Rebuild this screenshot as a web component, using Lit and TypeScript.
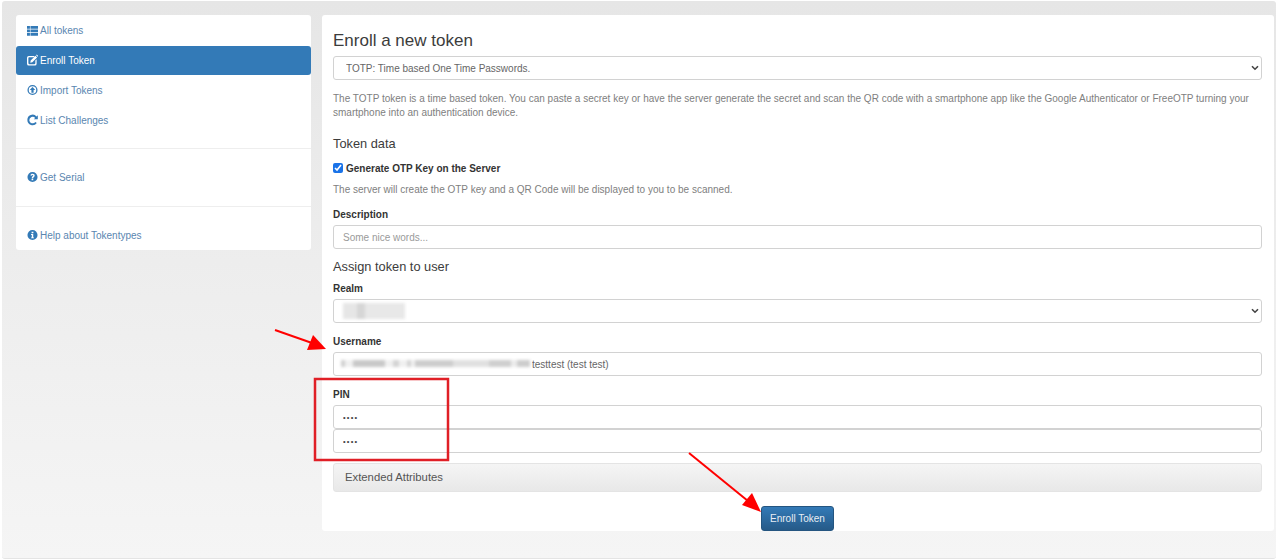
import { LitElement, html, css, svg, unsafeCSS } from "lit";
import { customElement } from "lit/decorators.js";

const icons: Record<string, unknown> = {
  list: svg`<path d="M0 .5h3.2v3H0zM3.8 .5H12v3H3.8zM0 4.4h3.2v3H0zM3.8 4.4H12v3H3.8zM0 8.3h3.2v3H0zM3.8 8.3H12v3H3.8z"/>`,
  edit: svg`<path fill-rule="evenodd" d="M2 1.5h6.5L7.2 2.9H2.4a.9.9 0 0 0-.9.9v5.8c0 .5.4.9.9.9h5.8c.5 0 .9-.4.9-.9V6.6l1.4-1.4V10a2 2 0 0 1-2 2H2a2 2 0 0 1-2-2V3.5a2 2 0 0 1 2-2z"/><path d="M4 6.6 9.2 1.4 11 3.2 5.8 8.4 3.6 8.9zM9.9.7l.7-.7 1.8 1.8-.7.7z"/>`,
  import: svg`<path fill-rule="evenodd" d="M6 .5a5.5 5.5 0 1 1 0 11 5.5 5.5 0 0 1 0-11zm0 1.4a4.1 4.1 0 1 0 0 8.2 4.1 4.1 0 0 0 0-8.2z"/><path d="M6 2.7 9 6H7.2v3H4.8V6H3z"/>`,
  refresh: svg`<path d="M10.4 2.1 11.8 .8v4.4H7.4l1.5-1.5A3.7 3.7 0 0 0 2.5 6.2a3.7 3.7 0 0 0 6.6 2l1.6 1.2A5.7 5.7 0 0 1 .4 6a5.7 5.7 0 0 1 10-3.9z"/>`,
  question: svg`<path fill-rule="evenodd" d="M6 .5a5.5 5.5 0 1 1 0 11 5.5 5.5 0 0 1 0-11zM5 8v1.6h1.8V8zM6.1 2.4c-1.3 0-2.2.6-2.5 1.8l1.4.4c.2-.6.5-.9 1-.9s.8.3.8.7c0 .4-.3.6-.7.9-.6.4-.9.9-.9 1.6v.4h1.6v-.3c0-.3.2-.5.6-.8.6-.4 1-.9 1-1.8 0-1.2-1-2-2.3-2z"/>`,
  info: svg`<path fill-rule="evenodd" d="M6 .5a5.5 5.5 0 1 1 0 11 5.5 5.5 0 0 1 0-11zM5 2.4v1.7h2V2.4zM4.4 5v1h.8v2.6h-.8v1h3.2v-1h-.8V5z"/>`,
};

const chevron = unsafeCSS(`url("data:image/svg+xml,%3Csvg xmlns='http://www.w3.org/2000/svg' width='8' height='6'%3E%3Cpath d='M1 1.2 4 4.2 7 1.2' fill='none' stroke='%23444' stroke-width='1.6'/%3E%3C/svg%3E")`);

@customElement("app-root")
export class AppRoot extends LitElement {
  static styles = css`
    :host { display: block; width: 1280px; height: 560px; background: #fff; font-family: "Liberation Sans", Arial, sans-serif; font-size: 10px; color: #333; position: relative; overflow: hidden; }
    .frame { box-sizing: border-box; width: 1274px; height: 558px; margin: 1px 0 0 2px; padding: 14px 2px 0 14px; display: grid; grid-template-columns: 295px 952px; column-gap: 11px; align-items: start; background: linear-gradient(#e6e6e6, #f5f5f5 100%); border-radius: 3px; border-bottom: 1px solid #e4e4e4; }
    .side { background: #fff; border-radius: 3px; height: 235px; padding-top: 1px; box-sizing: border-box; }
    .nav { display: flex; align-items: center; gap: 2px; height: 30px; padding-left: 11px; box-sizing: border-box; color: #5a86b0; }
    .nav.up { padding-bottom: 1px; }
    .nav.active { background: #337ab7; color: #fff; border-radius: 3px; height: 29px; }
    .nav svg { width: 11px; height: 12px; fill: #337ab7; flex: none; }
    .nav.active svg { fill: #fff; }
    .sep { border-top: 1px solid #eee; }
    .sep.a { margin-top: 13px; padding-top: 13px; }
    .sep.b { margin-top: 14px; padding-top: 13px; }
    .main { background: #fff; border-radius: 3px; height: 516px; box-sizing: border-box; padding: 0 12px 0 11px; display: flex; flex-direction: column; }
    h3 { margin: 16px 0 5px; font-size: 17px; line-height: 20px; font-weight: 400; color: #3c3c3c; }
    h4 { margin: 0; font-size: 12.8px; line-height: 16px; font-weight: 400; color: #3c3c3c; }
    p { margin: 0; color: #808080; line-height: 14px; }
    .desc { margin-top: 12px; }
    .h1 { margin-top: 16px; }
    .check { display: flex; align-items: center; height: 14px; margin-top: 9px; font-weight: 700; color: #333; gap: 3px; }
    .check input { margin: 0; width: 10px; height: 10px; accent-color: #1a73e8; }
    .help { margin-top: 8px; }
    label { display: block; font-weight: 700; line-height: 14px; color: #333; }
    .gap { margin-top: 11px; }
    .gap-lg { margin-top: 12px; }
    .gap-sm { margin-top: 7px; }
    .under { margin-top: 3px; }
    .assign { margin-top: 10px; }
    .ctl { box-sizing: border-box; display: block; width: 100%; height: 24px; border: 1px solid #d2d2d2; border-radius: 3px; background: #fff; color: #666; font: 10px "Liberation Sans", Arial, sans-serif; padding: 0 9px; outline: none; }
    .ctl::placeholder { color: #9a9a9a; }
    select.ctl { padding-left: 12px; appearance: none; background: #fff ${chevron} no-repeat right 2px center; }
    .user { padding-left: 198px; }
    .pin { font-size: 7.5px; letter-spacing: 1.2px; color: #444; }
    .wrap { position: relative; }
    .blur { position: absolute; filter: blur(1.5px); }
    .blur.realm { left: 10px; top: 4px; width: 62px; height: 16px; background: linear-gradient(90deg, #e6e6e6 0 22%, #d6d6d6 22% 36%, #e8e8e8 36% 100%); }
    .blur.username { left: 8px; top: 8px; width: 189px; height: 7px; background: linear-gradient(90deg, #d0d0d0 0 4px, #f0f0f0 4px 12px, #c8c8c8 12px 44px, #f0f0f0 44px 52px, #d4d4d4 52px 58px, #f0f0f0 58px 66px, #d4d4d4 66px 70px, #f0f0f0 70px 74px, #cdcdcd 74px 112px, #e0e0e0 112px 148px, #cfcfcf 148px 170px, #ececec 170px 176px, #cdcdcd 176px 189px); }
    .panel { box-sizing: border-box; height: 29px; margin-top: 10px; padding: 0 0 2px 11px; display: flex; align-items: center; font-size: 11.3px; color: #555; background: linear-gradient(#f5f5f5, #e8e8e8); border: 1px solid #e4e4e4; border-radius: 3px; }
    .actions { display: flex; justify-content: center; margin-top: 14px; }
    button { box-sizing: border-box; width: 73px; height: 25px; border: 1px solid #245580; border-radius: 3px; background: linear-gradient(#337ab7, #265a88); color: #e8eef4; font: 10px "Liberation Sans", Arial, sans-serif; padding: 0; }
    .overlay { position: absolute; left: 0; top: 0; width: 1280px; height: 560px; pointer-events: none; }
  `;

  private nav(icon: string, label: string, cls = "") {
    return html`<div class="nav ${cls}"><svg viewBox="0 0 12 12">${icons[icon]}</svg><span>${label}</span></div>`;
  }

  render() {
    return html`
      <div class="frame">
        <aside class="side">
          ${this.nav("list", "All tokens", "up")}
          ${this.nav("edit", "Enroll Token", "up active")}
          ${this.nav("import", "Import Tokens")}
          ${this.nav("refresh", "List Challenges")}
          <div class="sep a">${this.nav("question", "Get Serial")}</div>
          <div class="sep b">${this.nav("info", "Help about Tokentypes")}</div>
        </aside>
        <main class="main">
          <h3>Enroll a new token</h3>
          <select class="ctl"><option>TOTP: Time based One Time Passwords.</option></select>
          <p class="desc">The TOTP token is a time based token. You can paste a secret key or have the server generate the secret and scan the QR code with a smartphone app like the Google Authenticator or FreeOTP turning your smartphone into an authentication device.</p>
          <h4 class="h1">Token data</h4>
          <div class="check"><input type="checkbox" checked /><span>Generate OTP Key on the Server</span></div>
          <p class="help">The server will create the OTP key and a QR Code will be displayed to you to be scanned.</p>
          <label class="gap">Description</label>
          <input class="ctl under" placeholder="Some nice words..." />
          <h4 class="assign">Assign token to user</h4>
          <label class="gap-sm">Realm</label>
          <div class="wrap under">
            <select class="ctl"><option></option></select>
            <div class="blur realm"></div>
          </div>
          <label class="gap-lg">Username</label>
          <div class="wrap under">
            <input class="ctl user" value="testtest (test test)" />
            <div class="blur username"></div>
          </div>
          <label class="gap-lg">PIN</label>
          <input class="ctl under pin" type="password" value="1234" />
          <input class="ctl pin" type="password" value="1234" />
          <div class="panel">Extended Attributes</div>
          <div class="actions"><button>Enroll Token</button></div>
        </main>
      </div>
      <svg class="overlay" viewBox="0 0 1280 560">
        <rect x="315" y="379" width="133" height="81" fill="none" stroke="#e01f26" stroke-width="2.5" />
        <path d="M275 330 312 343" stroke="#f00" stroke-width="2" fill="none" />
        <path d="M326 349 307 350 313 335z" fill="#f00" />
        <path d="M689 453 748 501" stroke="#f00" stroke-width="2" fill="none" />
        <path d="M761 512 742 505 752 493z" fill="#f00" />
      </svg>
    `;
  }
}
